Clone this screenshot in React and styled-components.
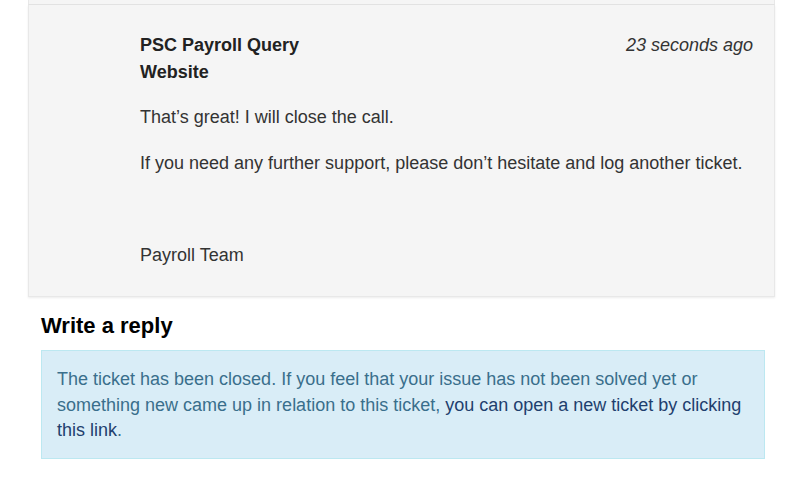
import React from "react";
import styled, { createGlobalStyle } from "styled-components";

const Global = createGlobalStyle`
  html, body { margin: 0; padding: 0; background: #fff; }
  body { font-family: "Liberation Sans", Arial, sans-serif; color: #333; }
  * { box-sizing: border-box; }
`;

const Page = styled.div`
  width: 805px;
  height: 484px;
  overflow: hidden;
  display: flex;
  flex-direction: column;
`;

const PrevCardEdge = styled.div`
  margin: 0 30px 0 28px;
  height: 5px;
  background: #f5f5f5;
  border-left: 1px solid #e8e8e8;
  border-right: 1px solid #e8e8e8;
  border-bottom: 1px solid #e3e3e3;
`;

const Card = styled.div`
  margin: 0 30px 0 28px;
  background: #f5f5f5;
  border: 1px solid #e8e8e8;
  border-top: none;
  box-shadow: 0 1px 2px rgba(0, 0, 0, 0.08);
  padding: 27px 21px 30px 111px;
`;

const Header = styled.div`
  display: flex;
  justify-content: space-between;
  align-items: flex-start;
  margin-bottom: 20px;
`;

const Author = styled.div`
  font-weight: bold;
  font-size: 18px;
  line-height: 27px;
  color: #222;
`;

const Time = styled.div`
  font-style: italic;
  font-size: 18px;
  line-height: 27px;
  color: #333;
`;

const Para = styled.p`
  margin: 0 0 24px;
  font-size: 18px;
  line-height: 22px;
  min-height: 22px;
  color: #333;
  &:last-child { margin-bottom: 0; }
`;

const Section = styled.div`
  padding: 16px 40px 0 41px;
`;

const Heading = styled.h3`
  margin: 0 0 11px;
  font-size: 22px;
  line-height: 26px;
  font-weight: bold;
  color: #000;
`;

const Alert = styled.div`
  background: #d9edf7;
  border: 1px solid #bce8f1;
  color: #3a6f8c;
  padding: 16px 15px 14px 15px;
  font-size: 18px;
  line-height: 25.5px;
`;

const AlertLink = styled.a`
  color: #1f3f6e;
  text-decoration: none;
`;

export default function App() {
  return (
    <Page>
      <Global />
      <PrevCardEdge />
      <Card>
        <Header>
          <Author>
            PSC Payroll Query
            <br />
            Website
          </Author>
          <Time>23 seconds ago</Time>
        </Header>
        <Para>That’s great! I will close the call.</Para>
        <Para>If you need any further support, please don’t hesitate and log another ticket.</Para>
        <Para>&nbsp;</Para>
        <Para>Payroll Team</Para>
      </Card>
      <Section>
        <Heading>Write a reply</Heading>
        <Alert>
          The ticket has been closed. If you feel that your issue has not been solved yet or
          something new came up in relation to this ticket,{" "}
          <AlertLink href="#">you can open a new ticket by clicking this link</AlertLink>.
        </Alert>
      </Section>
    </Page>
  );
}
